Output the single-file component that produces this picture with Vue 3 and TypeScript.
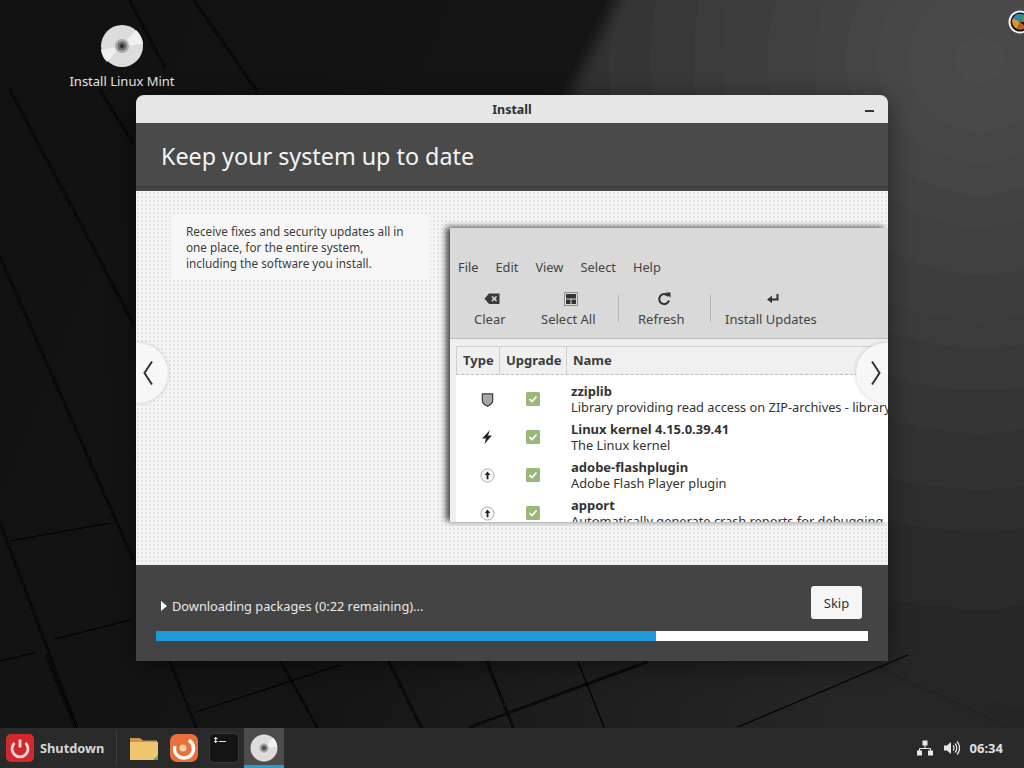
<script setup lang="ts">
interface Pkg { icon: string; name: string; desc: string }
const menus: string[] = ['File', 'Edit', 'View', 'Select', 'Help']
const pkgs: Pkg[] = [
  { icon: 'shield', name: 'zziplib', desc: 'Library providing read access on ZIP-archives - library' },
  { icon: 'bolt', name: 'Linux kernel 4.15.0.39.41', desc: 'The Linux kernel' },
  { icon: 'up', name: 'adobe-flashplugin', desc: 'Adobe Flash Player plugin' },
  { icon: 'up', name: 'apport', desc: 'Automatically generate crash reports for debugging' },
]
const progress = 70.2
</script>

<template>
  <div class="desktop">
    <svg class="wall" viewBox="0 0 1024 768" preserveAspectRatio="none">
      <defs>
        <linearGradient id="base" x1="0" y1="0" x2="1" y2="0.3">
          <stop offset="0" stop-color="#111111" />
          <stop offset="0.55" stop-color="#151515" />
          <stop offset="1" stop-color="#262626" />
        </linearGradient>
        <radialGradient id="glow" gradientUnits="userSpaceOnUse" cx="980" cy="60" r="720">
          <stop offset="0" stop-color="#4c4c4c" />
          <stop offset="0.35" stop-color="#3c3c3c" />
          <stop offset="0.7" stop-color="#2a2a2a" />
          <stop offset="1" stop-color="#222222" />
        </radialGradient>
        <filter id="soft" x="-10%" y="-10%" width="120%" height="120%"><feGaussianBlur stdDeviation="7" /></filter>
        <filter id="line" x="-5%" y="-5%" width="110%" height="110%"><feGaussianBlur stdDeviation="0.7" /></filter>
      </defs>
      <rect width="1024" height="768" fill="url(#base)" />
      <path d="M632 -30L570 95L888 661L1060 740V-30Z" fill="url(#glow)" filter="url(#soft)" />
      <g stroke="#070707" fill="none" stroke-linecap="round" filter="url(#line)">
        <g stroke-width="2.500">
          <path d="M10 90L133 323M0 257L133 559M0 523L77 727M100 90L133 143" />
          <path d="M129 0L165 67M194 0L256 90" />
          <path d="M46 655L75 727M170 662L196 727M281 662L317 727M389 662L421 727M487 662L513 727" />
          <path d="M470 727L647 662" />
        </g>
        <g stroke-width="1.200">
          <path d="M10 541L110 523M55 639L130 620M0 661L35 653" />
          <path d="M578 662L604 727M196 712L340 665M738 727L908 655" />
        </g>
      </g>
    </svg>

    <div class="desk-icon">
      <svg class="disc" viewBox="0 0 44 44">
        <circle cx="22" cy="22" r="21" fill="#dcdcdc" />
        <path d="M22 22L36 6A21 21 0 0 1 43 20Z" fill="#f0f0ee" />
        <path d="M22 22L7 38A21 21 0 0 1 1 26Z" fill="#eeeeea" />
        <circle cx="22" cy="22" r="7" fill="#a8a8a8" />
        <circle cx="22" cy="22" r="4.500" fill="#6b6b6b" />
        <circle cx="22" cy="22" r="2" fill="#2e2e2e" />
      </svg>
      <span class="desk-label">Install Linux Mint</span>
    </div>

    <div class="applet">
      <svg viewBox="0 0 24 24" width="24" height="24">
        <circle cx="12" cy="12" r="10.500" fill="#101010" stroke="#f2f2f2" stroke-width="2" />
        <path d="M12 12L5 8A8 8 0 0 1 14 4Z" fill="#2f86b8" />
        <path d="M12 12L5 8A8 8 0 0 0 9 19Z" fill="#d9962b" />
        <path d="M12 12L14 4A8 8 0 0 1 20 12Z" fill="#5f8d4a" />
        <path d="M12 12L9 19A8 8 0 0 0 18 17Z" fill="#b9602a" />
      </svg>
    </div>

    <main class="window">
      <header class="titlebar">
        <span class="title">Install</span>
        <span class="minimize"></span>
      </header>
      <div class="banner"><h1>Keep your system up to date</h1></div>
      <section class="slide">
        <p class="blurb">Receive fixes and security updates all in one place, for the entire system, including the software you install.</p>
        <div class="shot">
          <nav class="menubar"><span v-for="m in menus" :key="m">{{ m }}</span></nav>
          <div class="toolbar">
            <div class="tool t-clear">
              <svg viewBox="0 0 16 16" width="16" height="16"><path d="M5 2.500H15.500V13H5L0.500 7.800Z" fill="#3a3a3a" /><path d="M8 5.500L12.500 10M12.500 5.500L8 10" stroke="#d8d8d8" stroke-width="1.700" /></svg>
              <span>Clear</span>
            </div>
            <div class="tool t-all">
              <svg viewBox="0 0 16 16" width="16" height="16"><rect x="1.500" y="1.500" width="13" height="13" fill="none" stroke="#444" stroke-dasharray="1 1" /><rect x="3" y="3" width="10" height="10" fill="#333" /><path d="M8 8V13M3 8H13" stroke="#d8d8d8" /></svg>
              <span>Select All</span>
            </div>
            <i class="sep s1"></i>
            <div class="tool t-ref">
              <svg viewBox="0 0 16 16" width="16" height="16"><path d="M12.300 5.200A5 5 0 1 0 13 9.500" fill="none" stroke="#333" stroke-width="2.100" /><path d="M9.300 1.500L14.500 1.500L14.500 6.800Z" fill="#333" /></svg>
              <span>Refresh</span>
            </div>
            <i class="sep s2"></i>
            <div class="tool t-inst">
              <svg viewBox="0 0 16 16" width="16" height="16"><path d="M12.500 3V8.500H6" fill="none" stroke="#333" stroke-width="2" /><path d="M7 4.800V12.200L2 8.500Z" fill="#333" /></svg>
              <span>Install Updates</span>
            </div>
          </div>
          <div class="pane">
            <div class="tree">
              <div class="thead">
                <span class="c-type">Type</span>
                <span class="c-up">Upgrade</span>
                <span class="c-name">Name</span>
              </div>
              <div class="rows">
                <div v-for="p in pkgs" :key="p.name" class="row">
                  <span class="c-ico">
                    <svg v-if="p.icon === 'shield'" viewBox="0 0 16 16" width="15" height="15"><path d="M2.500 2H13.500V9C13.500 12 10.500 14 8 15C5.500 14 2.500 12 2.500 9Z" fill="#a8a8a8" stroke="#3c3c3c" stroke-width="1.300" /></svg>
                    <svg v-else-if="p.icon === 'bolt'" viewBox="0 0 16 16" width="16" height="16"><path d="M11 1L3 9.500H7L5.500 15L13 6.500H9Z" fill="#262626" /></svg>
                    <svg v-else viewBox="0 0 16 16" width="15" height="15"><circle cx="8" cy="8" r="7" fill="#fafafa" stroke="#aaa" /><path d="M8 3.800L11 7.500H9V12H7V7.500H5Z" fill="#222" /></svg>
                  </span>
                  <span class="c-chk">
                    <svg viewBox="0 0 14 14" width="14" height="14"><rect width="14" height="14" rx="1.500" fill="#9ab87c" /><path d="M3.500 7.200L6 9.500L10.500 4.500" fill="none" stroke="#fff" stroke-width="1.700" /></svg>
                  </span>
                  <div class="c-text">
                    <b>{{ p.name }}</b>
                    <span class="desc">{{ p.desc }}</span>
                  </div>
                </div>
              </div>
            </div>
          </div>
        </div>
        <button class="nav prev" aria-label="Previous"><svg viewBox="0 0 12 26" width="12" height="26"><path d="M10 1.500L2.500 13L10 24.500" fill="none" stroke="#333" stroke-width="2" /></svg></button>
        <button class="nav next" aria-label="Next"><svg viewBox="0 0 12 26" width="12" height="26"><path d="M2 1.500L9.500 13L2 24.500" fill="none" stroke="#333" stroke-width="2" /></svg></button>
      </section>
      <footer class="foot">
        <div class="status-row">
          <span class="status"><i class="tri"></i>Downloading packages (0:22 remaining)...</span>
          <button class="skip">Skip</button>
        </div>
        <div class="bar"><div class="fill" :style="{ width: progress + '%' }"></div></div>
      </footer>
    </main>

    <footer class="panel">
      <div class="menu-btn">
        <svg viewBox="0 0 30 30" width="30" height="30">
          <rect x="1" y="1" width="28" height="28" rx="5" fill="#d3282b" />
          <path d="M9.500 10A8 8 0 1 0 20.500 10" fill="none" stroke="#f8dcdc" stroke-width="2.800" />
          <path d="M15 6.500V14.500" stroke="#f8dcdc" stroke-width="2.800" />
        </svg>
        <span>Shutdown</span>
      </div>
      <i class="panel-sep"></i>
      <div class="launcher">
        <svg viewBox="0 0 30 30" width="30" height="30">
          <path d="M1 5H11L14 7.500H28V27H1Z" fill="#c79a45" />
          <path d="M1 9H29V27H1Z" fill="#eec66f" />
          <path d="M24 27L29 22V27Z" fill="#6e9a8a" />
        </svg>
      </div>
      <div class="launcher">
        <svg viewBox="0 0 30 30" width="30" height="30">
          <rect x="1" y="1" width="28" height="28" rx="7" fill="#e8713a" />
          <circle cx="15" cy="15.500" r="9.500" fill="none" stroke="#fff" stroke-width="3.500" stroke-dasharray="42 18" transform="rotate(-60 15 15.500)" />
          <circle cx="14" cy="15" r="3.500" fill="#f9d2a8" />
        </svg>
      </div>
      <div class="launcher">
        <svg viewBox="0 0 30 30" width="30" height="30">
          <rect x="0.500" y="0.500" width="29" height="29" rx="5" fill="#141414" stroke="#3a3a3a" />
          <path d="M5 5.500H8.500M5 8.500H8.500M6.700 4V10M10 8.500H17" stroke="#e6e6e6" stroke-width="1.200" />
        </svg>
      </div>
      <div class="launcher active">
        <svg viewBox="0 0 28 28" width="28" height="28">
          <circle cx="14" cy="14" r="13.500" fill="#dcdcdc" />
          <path d="M14 14L23 3.500A14 14 0 0 1 27 13Z" fill="#f0f0ee" />
          <circle cx="14" cy="14" r="4.500" fill="#a5a5a5" />
          <circle cx="14" cy="14" r="2.500" fill="#555" />
        </svg>
      </div>
      <div class="tray">
        <svg viewBox="0 0 18 16" width="18" height="16"><path d="M9 5V9M3.500 11V8.500H14.500V11" fill="none" stroke="#e8e8e8" /><rect x="6.500" y="0.500" width="5" height="5" fill="#e8e8e8" /><rect x="1" y="10.500" width="5" height="5" fill="#e8e8e8" /><rect x="12" y="10.500" width="5" height="5" fill="#e8e8e8" /></svg>
        <svg viewBox="0 0 17 16" width="17" height="16"><path d="M1 5.500H4L8 2V14L4 10.500H1Z" fill="#e8e8e8" /><path d="M10 5.500A3.500 3.500 0 0 1 10 10.500M12 3.500A6.500 6.500 0 0 1 12 12.500M14 1.500A9.500 9.500 0 0 1 14 14.500" fill="none" stroke="#e8e8e8" stroke-width="1.200" /></svg>
        <span class="clock">06:34</span>
      </div>
    </footer>
  </div>
</template>

<style>
html, body { margin: 0; background: #111; }
</style>

<style scoped>
.desktop {
  position: relative;
  width: 1024px;
  height: 768px;
  overflow: hidden;
  font-family: "Noto Sans", "Open Sans", sans-serif;
  color: #333;
}
.wall { position: absolute; inset: 0; width: 100%; height: 100%; }
.desk-icon {
  position: absolute;
  left: 62px;
  top: 24px;
  width: 120px;
  display: flex;
  flex-direction: column;
  align-items: center;
  gap: 5px;
}
.disc { width: 44px; height: 44px; }
.desk-label { color: #e4e4e4; font-size: 13px; line-height: 16px; white-space: nowrap; }
.applet { position: absolute; left: 1008px; top: 10px; width: 24px; height: 24px; }

.window {
  position: absolute;
  left: 136px;
  top: 95px;
  width: 752px;
  height: 566px;
  border-radius: 8px 8px 0 0;
  display: flex;
  flex-direction: column;
  overflow: hidden;
  box-shadow: 0 4px 24px rgba(0,0,0,.45);
}
.titlebar {
  height: 28px;
  background: #e6e6e6;
  display: flex;
  align-items: center;
  justify-content: center;
  position: relative;
}
.title { font-size: 12.500px; font-weight: 700; color: #2f2f2f; }
.minimize { position: absolute; right: 14px; top: 15px; width: 9px; height: 2px; background: #333; }
.banner {
  position: relative;
  height: 68px;
  background: #4a4a4a;
  box-sizing: border-box;
  display: flex;
  align-items: center;
  padding-left: 25px;
}
.banner::after {
  content: "";
  position: absolute;
  left: 0;
  right: 0;
  bottom: 0;
  height: 4px;
  background: #444;
  border-top: 1px solid #3a3a3a;
}
.banner h1 { margin: 0 0 3px; font-size: 23.300px; font-weight: 400; color: #f4f4f4; }

.slide {
  position: relative;
  height: 374px;
  display: flex;
  align-items: flex-start;
  background-color: #f5f5f5;
  background-image: radial-gradient(#e4e4e4 1px, transparent 1.200px);
  background-size: 4px 4px;
  overflow: hidden;
}
.blurb {
  margin: 24px 0 0 36px;
  width: 258px;
  height: 65px;
  box-sizing: border-box;
  padding: 8px 14px;
  background: #f7f7f7;
  font-size: 11.750px;
  line-height: 16px;
  color: #3c3c3c;
  flex: none;
}
.shot {
  flex: none;
  margin: 37px 0 0 20px;
  width: 438px;
  height: 294px;
  background: #d9d9d9;
  box-shadow: -4px -1px 6px rgba(0,0,0,.7);
  display: flex;
  flex-direction: column;
  overflow: hidden;
}
.menubar {
  display: flex;
  gap: 17px;
  padding: 30px 0 0 8px;
  height: 21px;
  font-size: 12.800px;
  line-height: 18px;
  color: #444;
}
.toolbar {
  position: relative;
  display: flex;
  height: 59px;
  border-bottom: 1px solid #bdbdbd;
}
.tool {
  position: absolute;
  top: 12px;
  display: flex;
  flex-direction: column;
  align-items: center;
  gap: 3px;
  font-size: 13px;
  line-height: 18px;
  color: #444;
  white-space: nowrap;
}
.tool svg { margin-left: 5px; }
.t-clear { left: 24px; }
.t-all { left: 91px; }
.t-ref { left: 188px; }
.t-inst { left: 275px; }
.sep { position: absolute; top: 16px; width: 1px; height: 27px; background: #b5b5b5; }
.s1 { left: 168px; }
.s2 { left: 260px; }
.pane { flex: 1; background: #efefef; padding: 7px 0 0 6px; min-height: 0; }
.tree {
  background: #fff;
  height: 100%;
  overflow: hidden;
}
.thead {
  display: flex;
  height: 29px;
  box-sizing: border-box;
  align-items: center;
  background: #f0f0f0;
  border: 1px solid #cfcfcf;
  border-bottom: 1px dashed #bcbcbc;
  font-size: 13px;
  font-weight: 700;
  color: #3c3c3c;
}
.thead span { box-sizing: border-box; height: 100%; display: flex; align-items: center; padding: 0 0 2px 6px; }
.c-type { width: 43px; border-right: 1px solid #cfcfcf; }
.c-up { width: 67px; border-right: 1px solid #cfcfcf; }
.rows { padding-top: 5px; }
.row { display: flex; align-items: center; height: 38px; }
.c-ico { flex: none; width: 62px; display: flex; justify-content: center; }
.c-chk { flex: none; width: 30px; display: flex; justify-content: center; }
.c-text { display: flex; flex-direction: column; padding-left: 23px; font-size: 13px; line-height: 16px; color: #333; white-space: nowrap; }
.c-text b { font-weight: 700; color: #333; }
.desc { font-size: 12.800px; }

.nav {
  position: absolute;
  top: 152px;
  width: 32px;
  height: 60px;
  padding: 0;
  border: 0;
  background: #f7f7f7;
  display: flex;
  align-items: center;
  justify-content: center;
  box-shadow: 0 0 4px rgba(0,0,0,.18);
}
.prev { left: 0; border-radius: 0 30px 30px 0; padding-right: 8px; }
.next { right: 0; border-radius: 30px 0 0 30px; padding-left: 8px; }

.foot {
  flex: 1;
  background: #444;
  padding: 21px 20px 0;
  box-sizing: border-box;
}
.status-row { display: flex; align-items: center; justify-content: space-between; height: 33px; padding-left: 5px; padding-right: 6px; }
.status { display: flex; align-items: center; font-size: 12.800px; color: #e8e8e8; margin-top: 7px; }
.tri { width: 0; height: 0; border-left: 6px solid #fff; border-top: 5px solid transparent; border-bottom: 5px solid transparent; margin-right: 5px; }
.skip {
  width: 51px;
  height: 33px;
  border: 0;
  padding: 0;
  border-radius: 3px;
  background: #f6f6f6;
  font: inherit;
  font-size: 13px;
  color: #333;
}
.bar { margin-top: 12px; height: 10px; background: #fff; }
.fill { height: 100%; background: #1c9bd8; }

.panel {
  position: absolute;
  left: 0;
  right: 0;
  bottom: 0;
  height: 40px;
  background: #2a2a2a;
  display: flex;
  align-items: center;
}
.menu-btn { display: flex; align-items: center; gap: 5px; padding-left: 5px; width: 116px; box-sizing: border-box; font-size: 12.800px; font-weight: 700; color: #d6d6d6; }
.panel-sep { width: 1px; height: 36px; background: #3c3c3c; margin-right: 7px; }
.launcher { width: 40px; height: 40px; display: flex; align-items: center; justify-content: center; box-sizing: border-box; }
.launcher.active { background: #4c4c4c; border-bottom: 3px solid #2a9bd0; padding-top: 3px; }
.tray { margin-left: auto; display: flex; align-items: center; gap: 9px; padding-right: 21px; }
.clock { font-size: 13px; font-weight: 700; color: #e0e0e0; margin-left: 1px; }
</style>
